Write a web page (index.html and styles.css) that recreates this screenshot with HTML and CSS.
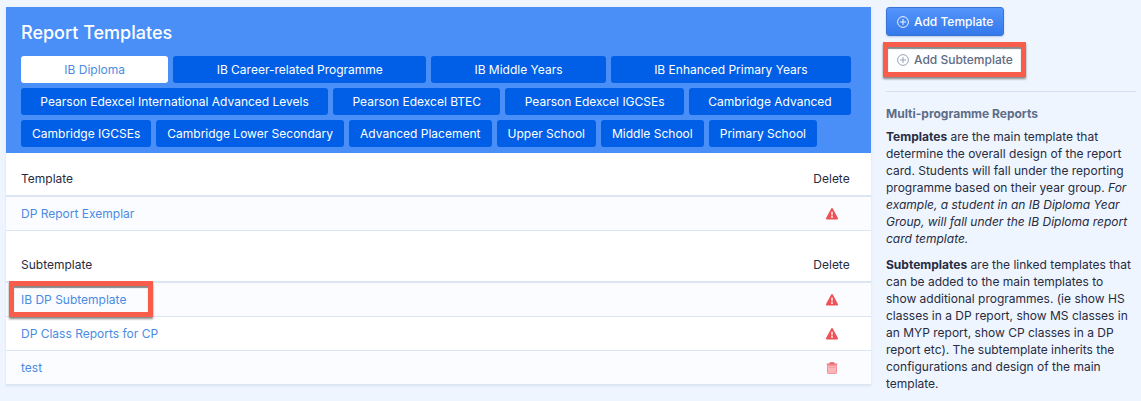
FILE: index.html
```html
<!DOCTYPE html>
<html lang="en">

<head>
    <meta charset="utf-8">
    <title>Report Templates</title>
    <link rel="stylesheet" href="styles.css">
</head>

<body>
    <svg class="sprite" aria-hidden="true">
        <symbol id="plus" viewBox="0 0 12 12">
            <circle cx="6" cy="6" r="5.4" fill="none" stroke="currentColor" stroke-width="0.9" />
            <path d="M6 3v6M3 6h6" fill="none" stroke="currentColor" stroke-width="0.9" />
        </symbol>
        <symbol id="warning" viewBox="0 0 12 12">
            <path d="M5.2 0.6a0.9 0.9 0 0 1 1.6 0L11.9 10a1 1 0 0 1-0.9 1.5H1A1 1 0 0 1 0.1 10z" fill="#f05157" />
            <path d="M5.2 3.8h1.6L6.5 7.4h-1z" fill="#fff" />
            <circle cx="6" cy="9" r="0.9" fill="#fff" />
        </symbol>
        <symbol id="trash" viewBox="0 0 12 12">
            <path d="M1.5 3.5h9v7a1.2 1.2 0 0 1-1.2 1.2H2.7a1.2 1.2 0 0 1-1.2-1.2z" fill="#fbb4b9" stroke="#f27c84" stroke-width="0.8" />
            <path d="M3 5.5h6" stroke="#f5959c" stroke-width="0.8" />
            <path d="M0.8 1.4h2.9V0.2h4.6v1.2h2.9v1.4H0.8z" fill="#ea6068" />
        </symbol>
    </svg>

    <div class="page">
        <main class="card">
            <header class="card-header">
                <h1>Report Templates</h1>
                <nav class="tabs">
                    <a href="#" class="tab active">IB Diploma</a>
                    <a href="#" class="tab">IB Career-related Programme</a>
                    <a href="#" class="tab">IB Middle Years</a>
                    <a href="#" class="tab">IB Enhanced Primary Years</a>
                    <a href="#" class="tab">Pearson Edexcel International Advanced Levels</a>
                    <a href="#" class="tab">Pearson Edexcel BTEC</a>
                    <a href="#" class="tab">Pearson Edexcel IGCSEs</a>
                    <a href="#" class="tab">Cambridge Advanced</a>
                    <a href="#" class="tab">Cambridge IGCSEs</a>
                    <a href="#" class="tab">Cambridge Lower Secondary</a>
                    <a href="#" class="tab">Advanced Placement</a>
                    <a href="#" class="tab">Upper School</a>
                    <a href="#" class="tab">Middle School</a>
                    <a href="#" class="tab">Primary School</a>
                </nav>
            </header>

            <table class="list">
                <thead>
                    <tr>
                        <th>Template</th>
                        <th class="delete">Delete</th>
                    </tr>
                </thead>
                <tbody>
                    <tr>
                        <td><a href="#">DP Report Exemplar</a></td>
                        <td class="delete"><button class="icon-btn" aria-label="Delete DP Report Exemplar"><svg><use href="#warning" /></svg></button></td>
                    </tr>
                </tbody>
            </table>

            <table class="list sub">
                <thead>
                    <tr>
                        <th>Subtemplate</th>
                        <th class="delete">Delete</th>
                    </tr>
                </thead>
                <tbody>
                    <tr>
                        <td><span class="marked">
                            <a href="#">IB DP Subtemplate</a>
                            <span class="marker marker-row"></span>
                        </span></td>
                        <td class="delete"><button class="icon-btn" aria-label="Delete IB DP Subtemplate"><svg><use href="#warning" /></svg></button></td>
                    </tr>
                    <tr>
                        <td><a href="#">DP Class Reports for CP</a></td>
                        <td class="delete"><button class="icon-btn" aria-label="Delete DP Class Reports for CP"><svg><use href="#warning" /></svg></button></td>
                    </tr>
                    <tr>
                        <td><a href="#">test</a></td>
                        <td class="delete"><button class="icon-btn" aria-label="Delete test"><svg><use href="#trash" /></svg></button></td>
                    </tr>
                </tbody>
            </table>
        </main>

        <aside class="sidebar">
            <div class="actions">
                <button class="btn btn-primary"><svg><use href="#plus" /></svg>Add Template</button>
                <span class="marked">
                    <button class="btn btn-default"><svg><use href="#plus" /></svg>Add Subtemplate</button>
                    <span class="marker marker-btn"></span>
                </span>
            </div>
            <hr>
            <h2>Multi-programme Reports</h2>
            <p><strong>Templates</strong> are the main template that determine the overall design of the report card. Students will fall under the reporting programme based on their year group. <em>For example, a student in an IB Diploma Year Group, will fall under the IB Diploma report card template.</em></p>
            <p><strong>Subtemplates</strong> are the linked templates that can be added to the main templates to show additional programmes. (ie show HS classes in a DP report, show MS classes in an MYP report, show CP classes in a DP report etc). The subtemplate inherits the configurations and design of the main template.</p>
        </aside>
    </div>
</body>

</html>
```
FILE: styles.css
```css
* {
    box-sizing: border-box;
}

body {
    margin: 0;
    background: #eef5ff;
    color: #272c3f;
    font-family: Inter, "Liberation Sans", sans-serif;
    font-size: 12px;
    line-height: 17px;
}

a {
    color: #4a8be3;
    text-decoration: none;
}

.sprite {
    display: none;
}

.page {
    display: grid;
    grid-template-columns: minmax(0, 1fr) 250px;
    gap: 15px;
    align-items: start;
    padding: 7px 5px 0 6px;
}

.card {
    background: #fff;
    box-shadow: 0 1px 2px #d5e0f0;
}

.card-header {
    padding: 15px 20px 6px 15px;
    background: #4a8ff7;
}

h1 {
    margin: 0 0 13px;
    color: #fff;
    font-size: 18px;
    font-weight: 500;
    line-height: 21px;
}

.tabs {
    display: flex;
    flex-wrap: wrap;
    gap: 5px;
}

/* keeps the last row of tabs from stretching */
.tabs::after {
    content: "";
    flex-grow: 1000;
}

.tab {
    flex-grow: 1;
    padding: 5px 11px;
    border-radius: 3px;
    background: #005fe6;
    color: #fff;
    text-align: center;
}

.tab.active {
    background: #fff;
    color: #4a8be3;
}

.list {
    width: 100%;
    border-collapse: separate;
    border-spacing: 0;
}

.list th {
    padding: 17px 15px 8px;
    border-bottom: 2px solid #dce5f2;
    font-weight: 400;
    text-align: left;
}

.sub th {
    padding-top: 25px;
}

.list td {
    padding: 8px 15px;
    border-bottom: 1px solid #dce5f2;
}

.list tbody tr:nth-child(odd) {
    background: #fafcff;
}

.list .delete {
    width: 79px;
    padding-left: 0;
    padding-right: 0;
    text-align: center;
}

.icon-btn {
    display: block;
    margin: 0 auto;
    padding: 0;
    border: 0;
    background: none;
    cursor: pointer;
}

.icon-btn svg,
.btn svg {
    display: block;
    width: 12px;
    height: 12px;
}

.actions {
    display: flex;
    flex-direction: column;
    align-items: flex-start;
    gap: 9px;
}

.btn {
    display: flex;
    align-items: center;
    gap: 5px;
    height: 29px;
    padding: 0 10px;
    border: 1px solid transparent;
    border-radius: 3px;
    font: inherit;
    font-weight: 500;
    cursor: pointer;
}

.btn-primary {
    border-color: #3973d5;
    background: linear-gradient(#5495fb, #3479ec);
    box-shadow: 0 1px 2px #b9cbe8;
    color: #fff;
}

.btn-default {
    background: #fdfeff;
    color: #5d6a84;
}

.btn-default svg {
    color: #9099ae;
}

.marked {
    position: relative;
    display: inline-block;
}

/* red highlight frames */
.marker {
    position: absolute;
    border: 5px solid #f85c4b;
    box-shadow: 0 2px 2px #888, inset 0 2px 1px #888;
    pointer-events: none;
}

.marker-row {
    inset: -10px -27px -9px -12px;
}

.marker-btn {
    inset: -3px -2px -3px -3px;
}

hr {
    margin: 17px 0 13px;
    border: 0;
    border-top: 1px solid #d5e0f1;
}

h2 {
    margin: 0 0 6px;
    color: #5d6c87;
    font-size: 12px;
    font-weight: 700;
    line-height: 17px;
}

p {
    margin: 0 0 9px;
}
```
